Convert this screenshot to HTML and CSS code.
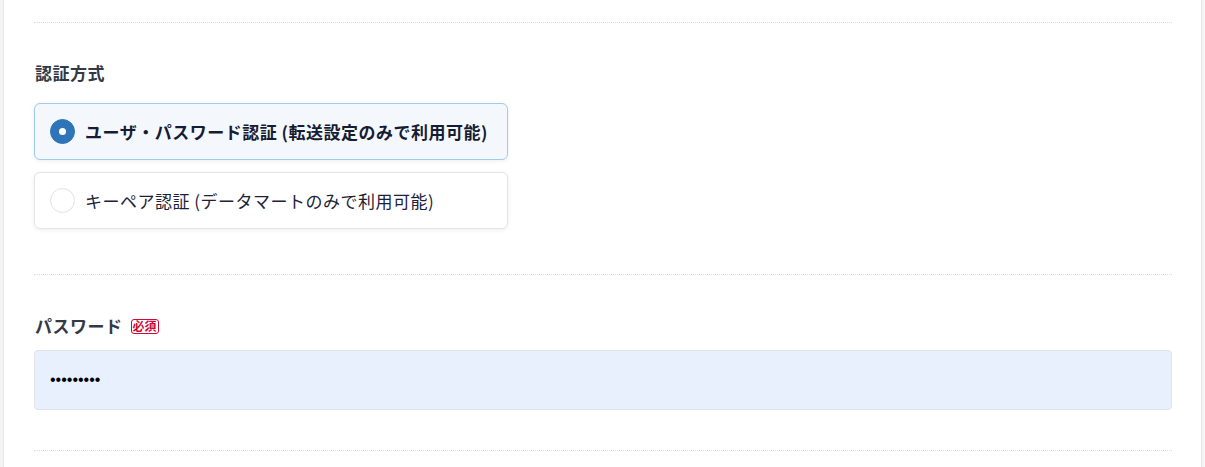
FILE: index.html
```html
<!DOCTYPE html>
<html lang="ja">
<head>
<meta charset="utf-8">
<link rel="stylesheet" href="styles.css">
</head>
<body>
<div class="card">
  <div class="top-spacer"></div>
  <section class="section section-auth">
    <div class="label">認証方式</div>
    <div class="options">
      <label class="option selected">
        <span class="radio"><span class="radio-dot"></span></span>
        <span class="option-text">ユーザ・パスワード認証 (転送設定のみで利用可能)</span>
      </label>
      <label class="option">
        <span class="radio"></span>
        <span class="option-text">キーペア認証 (データマートのみで利用可能)</span>
      </label>
    </div>
  </section>
  <section class="section section-pass">
    <div class="label">パスワード<span class="badge">必須</span></div>
    <input class="input" type="password" value="123456789">
  </section>
  <div class="bottom-divider"></div>
</div>
</body>
</html>
```

FILE: styles.css
```css
* { box-sizing: border-box; }
html, body { margin: 0; padding: 0; }
body {
  background: #f3f3f3;
  font-family: "Noto Sans CJK JP", "Noto Sans", sans-serif;
  height: 467px;
  overflow: hidden;
}
.card {
  margin: 0 3px;
  background: #ffffff;
  border-left: 1px solid #e8e8e8;
  border-right: 1px solid #e8e8e8;
  padding: 0 29px 0 30px;
  min-height: 467px;
}
.top-spacer { height: 22px; }
.section {
  border-top: 1px dotted #dcdcdc;
}
.section-auth { padding: 38px 0 45px; }
.section-pass { padding: 39px 0 40px; }
.bottom-divider { border-top: 1px dotted #dcdcdc; }
.label {
  font-size: 17px;
  letter-spacing: 0.5px;
  line-height: 24px;
  font-weight: 700;
  color: #333a45;
  display: flex;
  align-items: center;
  padding-left: 1px;
}
.section-auth .label { margin-bottom: 18px; }
.section-pass .label { margin-bottom: 12px; }
.badge {
  margin-left: 8px;
  font-size: 12px;
  letter-spacing: 0;
  line-height: 12px;
  font-weight: 700;
  color: #cf0a38;
  border: 1px solid #cf0a38;
  border-radius: 3px;
  padding: 0 1px;
  height: 15px;
  display: inline-flex;
  align-items: center;
}
.options {
  display: flex;
  flex-direction: column;
  gap: 12px;
}
.option {
  width: 474px;
  height: 57px;
  display: flex;
  align-items: center;
  padding: 0 15px;
  border: 1px solid #e4e4e4;
  border-radius: 6px;
  background: #ffffff;
  box-shadow: 0 1px 5px rgba(0,0,0,0.07);
}
.option.selected {
  border-color: #9fcbee;
  background: #f4f8fd;
}
.radio {
  width: 25px;
  height: 25px;
  border-radius: 50%;
  border: 1px solid #e2e2e2;
  background: #ffffff;
  display: flex;
  align-items: center;
  justify-content: center;
  flex: none;
}
.option.selected .radio {
  background: #2e74b8;
  border-color: #2e74b8;
}
.radio-dot {
  width: 7px;
  height: 7px;
  border-radius: 50%;
  background: #ffffff;
}
.option-text {
  margin-left: 10px;
  font-size: 17px;
  letter-spacing: 0.5px;
  color: #1c2236;
  white-space: nowrap;
}
.option.selected .option-text { font-weight: 700; color: #161c33; }
.input {
  display: block;
  width: 100%;
  height: 60px;
  border: 1px solid #dfe3ea;
  border-radius: 4px;
  background: #e8f0fe;
  padding: 0 15px;
  font-family: "Liberation Sans", sans-serif;
  font-size: 16px;
  color: #000000;
  outline: none;
}
```
